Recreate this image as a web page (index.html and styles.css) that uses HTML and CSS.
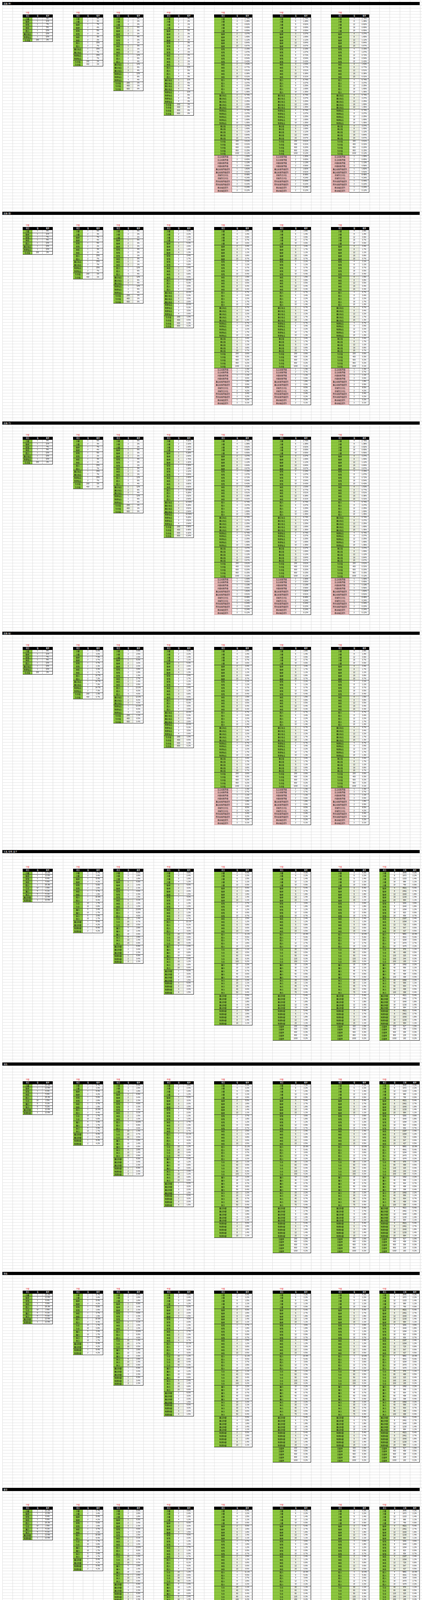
FILE: index.html
```html
<!DOCTYPE html>
<html lang="zh-CN">
<head>
<meta charset="utf-8">
<meta name="viewport" content="width=device-width, initial-scale=1">
<title>掉落概率表</title>
<link rel="stylesheet" href="styles.css">
</head>
<body>
<div class="sheet">
  <section class="sec sec-1 gap-a" data-kind="weapon" data-dec="0,0,0,0,2,2,2">
    <div class="bar">武器 (单)</div>
    <div class="tables"></div>
  </section>
  <section class="sec sec-2 gap-b" data-kind="weapon" data-dec="0,0,0,1,1,1,1">
    <div class="bar">武器 (双)</div>
    <div class="tables"></div>
  </section>
  <section class="sec sec-3 gap-b" data-kind="weapon" data-dec="0,0,0,2,2,2,2">
    <div class="bar">武器 (弓)</div>
    <div class="tables"></div>
  </section>
  <section class="sec sec-4 gap-b" data-kind="weapon" data-dec="0,1,1,1,1,1,1">
    <div class="bar">武器 (杖)</div>
    <div class="tables"></div>
  </section>
  <section class="sec sec-5 gap-c" data-kind="armor" data-dec="1,1,1,1,1,1,1,1">
    <div class="bar">头盔, 铠甲, 鞋子</div>
    <div class="tables"></div>
  </section>
  <section class="sec sec-6 gap-c" data-kind="armor" data-dec="1,1,1,1,1,1,1,1">
    <div class="bar">戒指</div>
    <div class="tables"></div>
  </section>
  <section class="sec sec-7 gap-c" data-kind="armor" data-dec="1,1,1,1,1,1,1,1">
    <div class="bar">项链</div>
    <div class="tables"></div>
  </section>
  <section class="sec sec-8 gap-c" data-kind="armor" data-extra="1" data-dec="1,1,1,1,1,1,1,1">
    <div class="bar">腰带</div>
    <div class="tables"></div>
  </section>
</div>
<script src="app.js"></script>
</body>
</html>
```

FILE: styles.css
```css
html, body {
  margin: 0;
  padding: 0;
  background: #fff;
}

body {
  font-family: "Liberation Sans", "Noto Sans CJK SC", sans-serif;
  color: #111;
}

.sheet {
  padding-top: 5px;
  background-color: #fff;
  background-image:
    repeating-linear-gradient(to right, #dddddd 0 1px, transparent 1px 25.8px),
    repeating-linear-gradient(to right, #dddddd 0 1px, transparent 1px 25.8px),
    repeating-linear-gradient(to right, #dddddd 0 1px, transparent 1px 25.8px),
    repeating-linear-gradient(to right, #dddddd 0 1px, transparent 1px 25.8px);
  background-size: 542.8px 100%, 104.2px 100%, 104.2px 100%, 186px 100%;
  background-position: 6px 0, 594.4px 0, 744.2px 0, 894px 0;
  background-repeat: no-repeat;
}

.sec {
  box-sizing: border-box;
  margin-left: 6px;
  background-image: repeating-linear-gradient(to bottom, #e2e2e2 0 1px, transparent 1px 7.87px);
}

.sec-1 { height: 537px; }
.sec-2 { height: 537px; }
.sec-3 { height: 538px; }
.sec-4 { height: 559px; }
.sec-5 { height: 544px; }
.sec-6 { height: 536px; }
.sec-7 { height: 553px; }
.sec-8 { height: 570px; }

.bar {
  box-sizing: border-box;
  width: 1068px;
  height: 8px;
  padding-left: 3px;
  background: #000;
  color: #fff;
  font-family: "Noto Sans CJK SC", sans-serif;
  font-size: 5px;
  line-height: 8px;
  white-space: nowrap;
}

.tables {
  display: flex;
  align-items: flex-start;
}

.gap-a .tables { margin-top: 15.83px; }
.gap-b .tables { margin-top: 23.13px; }
.gap-c .tables { margin-top: 31.83px; }

.block {
  flex: none;
  margin-left: 51.6px;
}

.block.near {
  margin-left: 25.8px;
}

.lvl {
  width: 25.8px;
  height: 7.87px;
  line-height: 7.87px;
  font-family: "Noto Sans CJK SC", sans-serif;
  font-size: 4.6px;
  color: #e5262b;
  text-align: center;
  white-space: nowrap;
}

.block.wide .lvl {
  width: 46.6px;
}

.grid {
  display: grid;
  grid-template-columns: 25.8px 25.8px 25.8px;
  grid-auto-rows: 7.87px;
}

.block.wide .grid {
  grid-template-columns: 46.6px 25.8px 25.8px;
}

.grid.g4 {
  grid-template-columns: 25.8px 25.8px 25.8px 25.8px;
}

.c {
  box-sizing: border-box;
  height: 7.87px;
  white-space: nowrap;
  text-align: center;
  font-size: 4.6px;
  line-height: 6.8px;
  color: #1a1a1a;
  background: #fff;
  border-right: 1px solid #a8a8a8;
  border-bottom: 1px solid #b9b9b9;
}

.c.h {
  background: #000;
  color: #fff;
  border: none;
  line-height: 7.8px;
  font-family: "Noto Sans CJK SC", sans-serif;
}

.c.nm {
  background: #8cc63f;
  color: #000;
  font-family: "Noto Sans CJK SC", sans-serif;
  border-right-color: #5f8f24;
  border-bottom-color: #79b031;
}

.c.nm.pk {
  background: #e6b8b7;
  border-right-color: #a27070;
  border-bottom-color: #cfa0a0;
}

.c.bg {
  background: #edf0e3;
}

.c.last {
  border-right-color: #2a2a2a;
}

.c.end {
  border-bottom-color: #2a2a2a;
}
```

FILE: app.js
```js
(function () {
  function harm(n) {
    var s = 0;
    for (var k = 1; k <= n; k++) s += 1 / k;
    return s;
  }

  function mk(name, n, valf, base) {
    var rows = [];
    for (var k = 1; k <= n; k++) rows.push({ v: valf(k), p: base / k });
    return { name: name, rows: rows };
  }

  var WG = [['力量', 9], ['敏捷', 11], ['智慧', 7], ['体质', 5], ['精力', 22], ['魔法攻击', 22], ['物理攻击', 22]];
  var PK = [['反击技能等级', 1.30], ['闪避技能等级', 1.13], ['暴击技能等级提升', 1.82], ['全属性百分比', 8.48], ['所有技能等级提升', 0.44], ['移动速度提升', 0.24]];
  var AG = [['力量', 10.1, 1], ['敏捷', 12.6, 1], ['智慧', 8.4, 1], ['体质', 5.6, 1], ['精力', 25.3, 1], ['生命', 2.5, 10], ['魔力', 5.1, 5], ['体力', 5.1, 5], ['魔法防御', 12.6, 1], ['物理防御', 12.6, 1]];

  function weaponTable(t) {
    var groups = [];
    var n, h;
    if (t <= 4) {
      n = t; h = harm(n);
      WG.forEach(function (g) { groups.push(mk(g[0], n, function (k) { return k; }, g[1] / h)); });
      groups.push(mk('生命值', n, function (k) { return 200 * k; }, 2 / h));
    } else {
      n = 5; h = harm(5);
      var step = t - 3;
      WG.concat([['暴击值', 11]]).forEach(function (g) {
        groups.push(mk(g[0], 5, function (k) { return step * k; }, g[1] * 0.7 / h));
      });
      groups.push(mk('生命值', 5, function (k) { return 200 * k; }, 2 * 0.7 / h));
      PK.forEach(function (g) {
        var x = mk(g[0], 2, function (k) { return k; }, g[1]);
        x.pink = true;
        groups.push(x);
      });
    }
    return { label: t * 10 + '级', wide: t >= 5, n: n, groups: groups, cols: 3 };
  }

  function armorTable(t, extra) {
    var n = t <= 4 ? t : 5;
    var step = t <= 4 ? 1 : (t === 5 ? 2 : (t === 8 ? 4 : 3));
    var h = harm(n);
    var f = t >= 6 ? 0.98 : 1;
    var groups = AG.map(function (g) {
      return mk(g[0], n, function (k) { return step * k * g[2]; }, g[1] * f / h);
    });
    if (t >= 6) {
      groups.push(mk('回避率', 5, function (k) { return 200 * k; }, 2.3 / h));
      if (extra) groups.push(mk('暴击', 5, function (k) { return (step + 1) * k; }, 11 / h));
    }
    return { label: t * 10 + '级', wide: t >= 5 && t <= 7, n: n, groups: groups, cols: t === 8 ? 4 : 3 };
  }

  function add(parent, cls, text) {
    var d = document.createElement('div');
    d.className = cls;
    d.textContent = text;
    parent.appendChild(d);
  }

  function render(spec, dec, near) {
    var block = document.createElement('div');
    block.className = 'block' + (near ? ' near' : '') + (spec.wide ? ' wide' : '');
    var lab = document.createElement('div');
    lab.className = 'lvl';
    lab.textContent = spec.label;
    block.appendChild(lab);
    var grid = document.createElement('div');
    grid.className = 'grid' + (spec.cols === 4 ? ' g4' : '');
    var heads = spec.cols === 4 ? ['项目', '值', '召唤', '概率'] : ['项目', '值', '概率'];
    heads.forEach(function (hd) { add(grid, 'c h', hd); });
    spec.groups.forEach(function (g, gi) {
      var beige = spec.n >= 3 && gi % 2 === 1 && !g.pink;
      g.rows.forEach(function (r, ri) {
        var end = ri === g.rows.length - 1 ? ' end' : '';
        add(grid, 'c nm' + (g.pink ? ' pk' : '') + end, g.name);
        add(grid, 'c v' + (beige ? ' bg' : '') + end, String(r.v));
        if (spec.cols === 4) add(grid, 'c v' + (beige ? ' bg' : '') + end, String(Math.round(r.p * 910)));
        add(grid, 'c v last' + end, r.p.toFixed(dec) + '%');
      });
    });
    block.appendChild(grid);
    return block;
  }

  var secs = document.querySelectorAll('.sec');
  Array.prototype.forEach.call(secs, function (sec) {
    var kind = sec.getAttribute('data-kind');
    var decs = sec.getAttribute('data-dec').split(',').map(Number);
    var extra = sec.getAttribute('data-extra') === '1';
    var box = sec.querySelector('.tables');
    var count = kind === 'weapon' ? 7 : 8;
    for (var t = 1; t <= count; t++) {
      var spec = kind === 'weapon' ? weaponTable(t) : armorTable(t, extra);
      box.appendChild(render(spec, decs[t - 1], t === 3 || t === 8));
    }
  });
})();
```
